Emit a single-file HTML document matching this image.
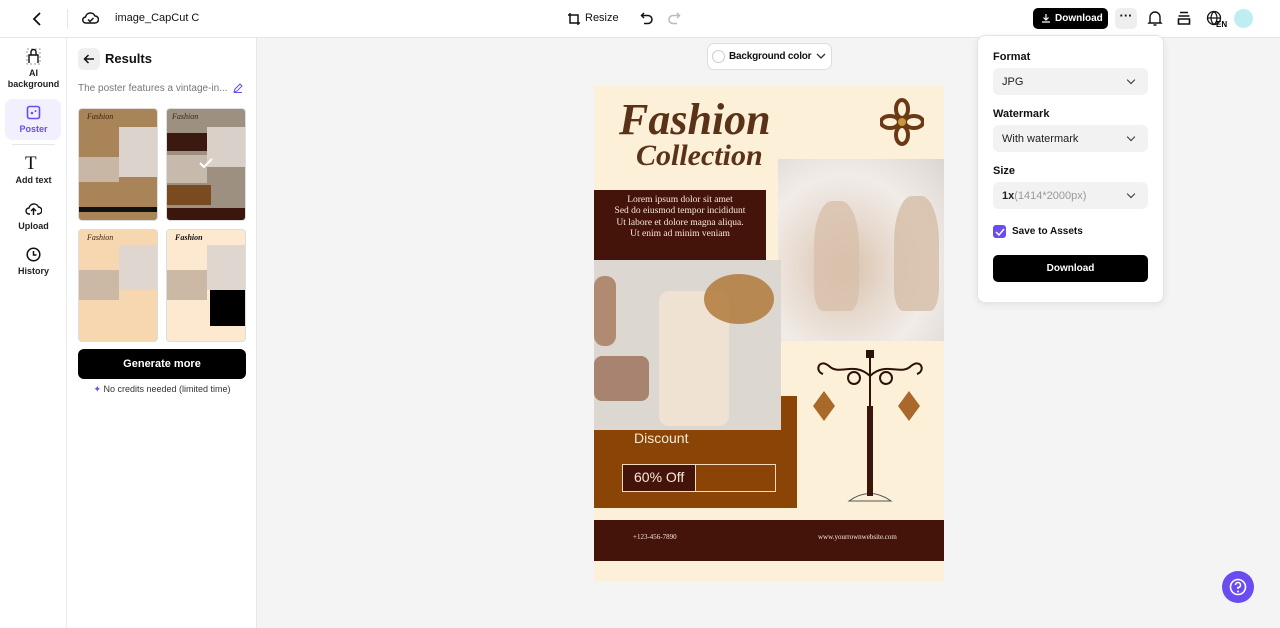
<!DOCTYPE html>
<html><head><meta charset="utf-8"><style>
*{box-sizing:border-box;margin:0;padding:0}
body{width:1280px;height:628px;overflow:hidden;font-family:"Liberation Sans",sans-serif;background:#f4f4f5;position:relative;color:#111}
.abs{position:absolute}
.top{left:0;top:0;width:1280px;height:38px;background:#fff;border-bottom:1px solid #e6e6e6}
.rail{left:0;top:38px;width:67px;height:590px;background:#fff;border-right:1px solid #ececec}
.panel{left:67px;top:38px;width:190px;height:590px;background:#fff;border-right:1px solid #e6e6e6}
.ri{position:absolute;left:0;width:67px;text-align:center;font-size:9px;font-weight:bold;color:#222}
.thumb{position:absolute;width:80px;height:113px;border-radius:4px;overflow:hidden;border:1px solid #ddd}
.sel{position:absolute;left:15px;width:155px;height:27px;background:#f2f2f3;border-radius:6px;font-size:11px;padding:8px 9px;color:#222}
.sel:after{content:"";position:absolute;right:14px;top:9px;width:5px;height:5px;border-right:1.3px solid #333;border-bottom:1.3px solid #333;transform:rotate(45deg)}
.lb{position:absolute;left:15px;font-size:11px;font-weight:bold}
</style></head><body>
<div class="abs top">
 <svg class="abs" style="left:31px;top:11px" width="12" height="16"><path d="M9 2 L3 8 L9 14" fill="none" stroke="#111" stroke-width="1.8"/></svg>
 <div class="abs" style="left:67px;top:9px;width:1px;height:20px;background:#e5e5e5"></div>
 <svg class="abs" style="left:82px;top:11px" width="17" height="14"><path d="M4 12 H13 A3.5 3.5 0 0 0 13 5 A5 5 0 0 0 3.5 6 A3 3 0 0 0 4 12Z M6 8.5 L8 10.5 L11.5 7" fill="none" stroke="#111" stroke-width="1.5"/></svg>
 <div class="abs" style="left:115px;top:12px;font-size:11px">image_CapCut C</div>
 <svg class="abs" style="left:567px;top:12px" width="14" height="14"><path d="M3 1 V11 H13 M1 3 H11 V13" fill="none" stroke="#111" stroke-width="1.5"/></svg>
 <div class="abs" style="left:585px;top:12px;font-size:11px">Resize</div>
 <svg class="abs" style="left:640px;top:11px" width="14" height="14"><path d="M4 2 L1.5 4.5 L4 7 M1.5 4.5 H8 A4 4 0 0 1 8 12.5 H4" fill="none" stroke="#111" stroke-width="1.5"/></svg>
 <svg class="abs" style="left:667px;top:11px" width="14" height="14"><path d="M10 2 L12.5 4.5 L10 7 M12.5 4.5 H6 A4 4 0 0 0 6 12.5 H10" fill="none" stroke="#bbb" stroke-width="1.5"/></svg>
 <div class="abs" style="left:1033px;top:8px;width:75px;height:21px;background:#000;border-radius:5px;color:#fff;font-size:10px;font-weight:bold;padding:5px 0 0 22px">Download</div>
 <svg class="abs" style="left:1041px;top:13px" width="10" height="10"><path d="M5 1 V7 M2.5 4.5 L5 7 L7.5 4.5 M1 9 H9" fill="none" stroke="#fff" stroke-width="1.2"/></svg>
 <div class="abs" style="left:1115px;top:8px;width:22px;height:21px;background:#eee;border-radius:5px;text-align:center;font-size:13px;line-height:16px;font-weight:bold">···</div>
 <svg class="abs" style="left:1147px;top:10px" width="16" height="17"><path d="M3 12 V7 A5 5 0 0 1 13 7 V12 L14 13 H2Z M6.5 15 H9.5" fill="none" stroke="#111" stroke-width="1.4"/></svg>
 <svg class="abs" style="left:1177px;top:11px" width="14" height="15"><path d="M3 1.5 H11 M1.5 5 H12.5 M1.5 8 H12.5 V13 H1.5Z" fill="none" stroke="#111" stroke-width="1.6"/></svg>
 <svg class="abs" style="left:1206px;top:10px" width="22" height="18"><circle cx="8" cy="8" r="6.5" fill="none" stroke="#111" stroke-width="1.3"/><path d="M1.5 8 H14.5 M8 1.5 C4 5 4 11 8 14.5 C12 11 12 5 8 1.5" fill="none" stroke="#111" stroke-width="1.2"/><text x="10" y="17" font-size="8" font-weight="bold" font-family="Liberation Sans">EN</text></svg>
 <div class="abs" style="left:1234px;top:9px;width:19px;height:19px;border-radius:50%;background:#bfeef2"></div>
</div>
<div class="abs rail">
 <svg class="abs" style="left:26px;top:10px" width="15" height="17"><rect x="1" y="1" width="13" height="15" fill="none" stroke="#999" stroke-dasharray="2 2"/><path d="M3 15 V7 H12 V15 M5 7 V4 A2.5 2.5 0 0 1 10 4 V7" fill="none" stroke="#111" stroke-width="1.4"/></svg>
 <div class="ri" style="top:30px;line-height:11px">AI<br>background</div>
 <div class="abs" style="left:5px;top:61px;width:56px;height:41px;background:#f2efff;border-radius:8px"></div>
 <svg class="abs" style="left:26px;top:67px" width="15" height="15"><rect x="1.5" y="1.5" width="12" height="12" rx="2" fill="none" stroke="#6a4cf0" stroke-width="1.6"/><circle cx="6" cy="8" r="1.3" fill="#6a4cf0"/><circle cx="9.5" cy="6" r="1" fill="#6a4cf0"/></svg>
 <div class="ri" style="top:86px;color:#6a4cf0">Poster</div>
 <div class="abs" style="left:12px;top:106px;width:43px;height:1px;background:#e6e6e6"></div>
 <div class="abs" style="left:25px;top:115px;font-family:'Liberation Serif',serif;font-size:19px">T</div>
 <div class="ri" style="top:137px">Add text</div>
 <svg class="abs" style="left:25px;top:163px" width="17" height="15"><path d="M5 13 H4 A3 3 0 0 1 4 7 A5 5 0 0 1 13.5 6 A3.3 3.3 0 0 1 13 13 H12 M8.5 14 V8 M6 10 L8.5 7.5 L11 10" fill="none" stroke="#111" stroke-width="1.4"/></svg>
 <div class="ri" style="top:183px">Upload</div>
 <svg class="abs" style="left:26px;top:209px" width="15" height="15"><circle cx="7.5" cy="7.5" r="6.3" fill="none" stroke="#111" stroke-width="1.5"/><path d="M7.5 4 V8 H10.5" fill="none" stroke="#111" stroke-width="1.5"/></svg>
 <div class="ri" style="top:228px">History</div>
</div>
<div class="abs panel">
 <div class="abs" style="left:11px;top:10px;width:22px;height:22px;background:#efefef;border-radius:6px"></div>
 <svg class="abs" style="left:16px;top:15px" width="12" height="12"><path d="M11 6 H1.5 M5.5 2 L1.5 6 L5.5 10" fill="none" stroke="#111" stroke-width="1.5"/></svg>
 <div class="abs" style="left:38px;top:13px;font-size:13px;font-weight:bold">Results</div>
 <div class="abs" style="left:11px;top:45px;font-size:10px;color:#777">The poster features a vintage-in...</div>
 <svg class="abs" style="left:166px;top:45px" width="10" height="10"><path d="M1 9 L2 6 L7 1 L9 3 L4 8Z M1 9.5 H9" fill="none" stroke="#6a4cf0" stroke-width="1"/></svg>
 <div class="thumb" style="left:11px;top:70px;background:#a88458">
  <div class="abs" style="left:0;top:48px;width:40px;height:25px;background:#c9b7a5"></div><div class="abs" style="left:40px;top:18px;width:39px;height:50px;background:#dcd3cc"></div><div class="abs" style="left:0;top:98px;width:80px;height:5px;background:#111"></div><div class="abs" style="left:8px;top:3px;font-size:8px;font-style:italic;color:#3a2410;font-family:'Liberation Serif',serif">Fashion</div></div>
 <div class="thumb" style="left:99px;top:70px;background:#9e9080">
  <div class="abs" style="left:0;top:24px;width:40px;height:18px;background:#3a1a10"></div><div class="abs" style="left:0;top:46px;width:40px;height:28px;background:#c7b9ab"></div><div class="abs" style="left:40px;top:18px;width:39px;height:40px;background:#d9d1c9"></div><div class="abs" style="left:0;top:76px;width:44px;height:20px;background:#7a4a20"></div><div class="abs" style="left:0;top:99px;width:80px;height:13px;background:#3a160c"></div><div class="abs" style="left:5px;top:3px;font-size:8px;font-style:italic;color:#3a2410;font-family:'Liberation Serif',serif">Fashion</div>
  <svg class="abs" style="left:31px;top:48px" width="16" height="12"><path d="M2 6 L6 10 L14 2" fill="none" stroke="#fff" stroke-width="2"/></svg></div>
 <div class="thumb" style="left:11px;top:191px;background:#f6d7b0">
  <div class="abs" style="left:0;top:40px;width:40px;height:30px;background:#cbb8a5"></div><div class="abs" style="left:40px;top:15px;width:39px;height:45px;background:#dfd6cf"></div><div class="abs" style="left:8px;top:3px;font-size:8px;font-style:italic;color:#3a2410;font-family:'Liberation Serif',serif">Fashion</div></div>
 <div class="thumb" style="left:99px;top:191px;background:#fde9cf">
  <div class="abs" style="left:0;top:40px;width:40px;height:30px;background:#cbb8a5"></div><div class="abs" style="left:40px;top:15px;width:39px;height:45px;background:#dfd6cf"></div><div class="abs" style="left:43px;top:60px;width:37px;height:36px;background:#000"></div><div class="abs" style="left:8px;top:3px;font-size:8px;font-style:italic;color:#111;font-family:'Liberation Serif',serif;font-weight:bold">Fashion</div></div>
 <div class="abs" style="left:11px;top:311px;width:168px;height:30px;background:#000;border-radius:6px;color:#fff;font-size:11px;font-weight:bold;text-align:center;line-height:30px">Generate more</div>
 <div class="abs" style="left:0;top:346px;width:190px;text-align:center;font-size:9px;color:#333"><span style="color:#6a4cf0">✦</span> No credits needed (limited time)</div>
</div>
<div class="abs" style="left:707px;top:43px;width:125px;height:27px;background:#fff;border:1px solid #ddd;border-radius:7px;font-size:10px;font-weight:bold;padding:7px 0 0 21px;white-space:nowrap;letter-spacing:-0.2px">Background color</div>
<div class="abs" style="left:712px;top:50px;width:13px;height:13px;border-radius:50%;border:1px solid #ccc"></div>
<svg class="abs" style="left:816px;top:53px" width="10" height="7"><path d="M1 1 L5 5 L9 1" fill="none" stroke="#333" stroke-width="1.3"/></svg>

<div class="abs" style="left:594px;top:86px;width:350px;height:495px;background:#fdf0d8;overflow:hidden">
 <div class="abs" style="left:25px;top:8px;font-family:'Liberation Serif',serif;font-style:italic;font-weight:bold;font-size:44px;color:#5a3218">Fashion</div>
 <div class="abs" style="left:42px;top:53px;font-family:'Liberation Serif',serif;font-style:italic;font-weight:bold;font-size:30px;color:#5a3218">Collection</div>
 <svg class="abs" style="left:286px;top:12px" width="44" height="48"><g fill="none" stroke="#6a3a15" stroke-width="4"><ellipse cx="22" cy="11" rx="6" ry="9"/><ellipse cx="22" cy="37" rx="6" ry="9"/><ellipse cx="10" cy="24" rx="9" ry="6"/><ellipse cx="34" cy="24" rx="9" ry="6"/></g><circle cx="22" cy="24" r="4" fill="#c8963c"/></svg>
 <div class="abs" style="left:0;top:104px;width:172px;height:72px;background:#44140a;color:#f6e8d8;font-family:'Liberation Serif',serif;font-size:9.5px;text-align:center;line-height:11.3px;padding-top:5px">Lorem ipsum dolor sit amet<br>Sed do eiusmod tempor incididunt<br>Ut labore et dolore magna aliqua.<br>Ut enim ad minim veniam</div>
 <div class="abs" style="left:184px;top:73px;width:166px;height:182px;background:radial-gradient(ellipse at 40% 60%,#d9c1aa 0%,#e8dcd2 35%,#f1ece8 60%,#dcd6d2 100%)"></div>
 <div class="abs" style="left:220px;top:115px;width:45px;height:110px;border-radius:40% 40% 20% 20%;background:#d8c1ab;opacity:.8"></div>
 <div class="abs" style="left:300px;top:110px;width:45px;height:115px;border-radius:40% 40% 20% 20%;background:#d6bda6;opacity:.8"></div>
 <div class="abs" style="left:0;top:310px;width:203px;height:112px;background:#8a4406"></div>
 <div class="abs" style="left:0;top:174px;width:187px;height:170px;background:#dcd7d0"></div>
 <div class="abs" style="left:65px;top:205px;width:70px;height:135px;background:#f0e2d2;border-radius:10px"></div>
 <div class="abs" style="left:0;top:270px;width:55px;height:45px;background:#a88470;border-radius:8px"></div>
 <div class="abs" style="left:0;top:190px;width:22px;height:70px;background:#b08b72;border-radius:10px"></div>
 <div class="abs" style="left:110px;top:188px;width:70px;height:50px;background:#b07a3c;border-radius:50%;opacity:.85"></div>
 <div class="abs" style="left:40px;top:344px;font-size:14px;color:#fbe9d4">Discount</div>
 <div class="abs" style="left:28px;top:378px;width:154px;height:28px;border:1.5px solid #f2dcc0"></div>
 <div class="abs" style="left:29px;top:379px;width:73px;height:26px;background:#44140a;border-right:1.5px solid #f2dcc0;color:#fbe9d4;font-size:14px;padding:4px 0 0 11px">60% Off</div>
 <div class="abs" style="left:0;top:434px;width:350px;height:41px;background:#44140a"></div>
 <div class="abs" style="left:39px;top:447px;font-size:7px;color:#f6e8d8;font-family:'Liberation Serif',serif">+123-456-7890</div>
 <div class="abs" style="left:224px;top:447px;font-size:7px;color:#f6e8d8;font-family:'Liberation Serif',serif">www.yourrownwebsite.com</div>
 <svg class="abs" style="left:215px;top:260px" width="118" height="160"><g fill="none" stroke="#2a1208" stroke-width="2"><path d="M61 5 V150"/><path d="M61 30 C45 15 30 30 20 20 C10 12 5 25 14 28"/><path d="M61 30 C77 15 92 30 102 20 C112 12 117 25 108 28"/><circle cx="45" cy="32" r="6"/><circle cx="77" cy="32" r="6"/><path d="M40 155 Q61 140 82 155 Z" stroke="#555" stroke-width="1"/></g><rect x="57" y="4" width="8" height="8" fill="#2a1208"/><path d="M15 45 L26 60 L15 75 L4 60Z M100 45 L111 60 L100 75 L89 60Z" fill="#a8692a"/><rect x="58" y="60" width="6" height="90" fill="#3a160c"/></svg>
</div>

<div class="abs" style="left:977px;top:35px;width:187px;height:268px;background:#fff;border:1px solid #e5e5e5;border-radius:8px;box-shadow:0 2px 8px rgba(0,0,0,.08)">
 <div class="lb" style="top:15px">Format</div>
 <div class="sel" style="top:32px">JPG</div>
 <div class="lb" style="top:72px">Watermark</div>
 <div class="sel" style="top:89px">With watermark</div>
 <div class="lb" style="top:129px">Size</div>
 <div class="sel" style="top:146px"><b>1x</b><span style="color:#999">(1414*2000px)</span></div>
 <div class="abs" style="left:15px;top:189px;width:13px;height:13px;background:#6a4cf0;border-radius:3px"></div>
 <svg class="abs" style="left:17px;top:192px" width="10" height="8"><path d="M1 4 L4 7 L9 1" fill="none" stroke="#fff" stroke-width="1.5"/></svg>
 <div class="abs" style="left:34px;top:190px;font-size:10px;font-weight:bold">Save to Assets</div>
 <div class="abs" style="left:15px;top:219px;width:155px;height:27px;background:#000;border-radius:5px;color:#fff;font-size:10px;font-weight:bold;text-align:center;line-height:27px">Download</div>
</div>
<div class="abs" style="left:1222px;top:571px;width:32px;height:32px;border-radius:50%;background:#6a4cf0"></div>
<svg class="abs" style="left:1229px;top:578px" width="18" height="18"><circle cx="9" cy="9" r="7.5" fill="none" stroke="#fff" stroke-width="1.6"/><path d="M6.5 7 A2.5 2.5 0 1 1 9 9.5 V11" fill="none" stroke="#fff" stroke-width="1.6"/><circle cx="9" cy="13.5" r="1" fill="#fff"/></svg>
</body></html>
